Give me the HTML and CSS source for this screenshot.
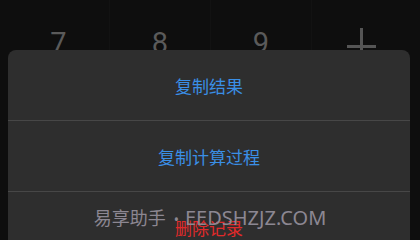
FILE: index.html
```html
<!DOCTYPE html>
<html>
<head>
<meta charset="utf-8">
<link rel="stylesheet" href="styles.css">
</head>
<body>
<div class="screen">
  <div class="keypad">
    <div class="key">7</div>
    <div class="key">8</div>
    <div class="key">9</div>
    <div class="key">
      <svg class="plus" width="30" height="40" viewBox="0 0 30 40"><rect x="0" y="17" width="29" height="3" fill="#555"/><rect x="13" y="0" width="3" height="40" fill="#555"/></svg>
    </div>
  </div>
  <div class="sheet">
    <div class="item blue">复制结果</div>
    <div class="item blue">复制计算过程</div>
    <div class="item red">删除记录</div>
  </div>
  <div class="watermark"><span class="wm-cn">易享助手</span><span class="wm-dot">•</span><span class="wm-en">EEDSHZJZ.COM</span></div>
</div>
</body>
</html>
```
FILE: styles.css
```css
html, body {
  margin: 0;
  padding: 0;
  background: #080808;
}
.screen {
  position: relative;
  width: 420px;
  height: 240px;
  overflow: hidden;
  background: #0e0e0e;
  font-family: "Noto Sans", "Noto Sans CJK SC", sans-serif;
}
.keypad {
  display: grid;
  grid-template-columns: repeat(4, 1fr);
  padding: 0 8px;
  height: 70px;
}
.key {
  display: flex;
  justify-content: center;
  padding-top: 29px;
  font-family: Roboto, sans-serif;
  font-size: 29px;
  line-height: 28px;
  color: #5a5a5a;
  border-left: 1px solid #121212;
}
.key:first-child {
  border-left: none;
}
.plus {
  margin-top: -1px;
}
.sheet {
  position: absolute;
  left: 8px;
  top: 50px;
  width: 402px;
  height: 200px;
  background: #2e2e2e;
  border-radius: 8px 8px 0 0;
}
.item {
  height: 70px;
  display: flex;
  align-items: center;
  justify-content: center;
  font-family: "Noto Sans CJK SC", sans-serif;
  font-size: 17px;
  border-bottom: 1px solid #474747;
}
.item:last-child {
  border-bottom: none;
}
.blue {
  color: #3a8fe6;
}
.red {
  color: #e02a2a;
}
.watermark {
  position: absolute;
  left: 0;
  right: 0;
  top: 204px;
  display: flex;
  justify-content: center;
  align-items: baseline;
  color: #8c8792;
}
.wm-cn {
  font-family: "Noto Sans CJK SC", sans-serif;
  font-size: 18px;
}
.wm-dot {
  font-size: 14px;
  margin: 0 6px 0 8px;
}
.wm-en {
  font-family: "Noto Sans", sans-serif;
  font-size: 20px;
}
```
